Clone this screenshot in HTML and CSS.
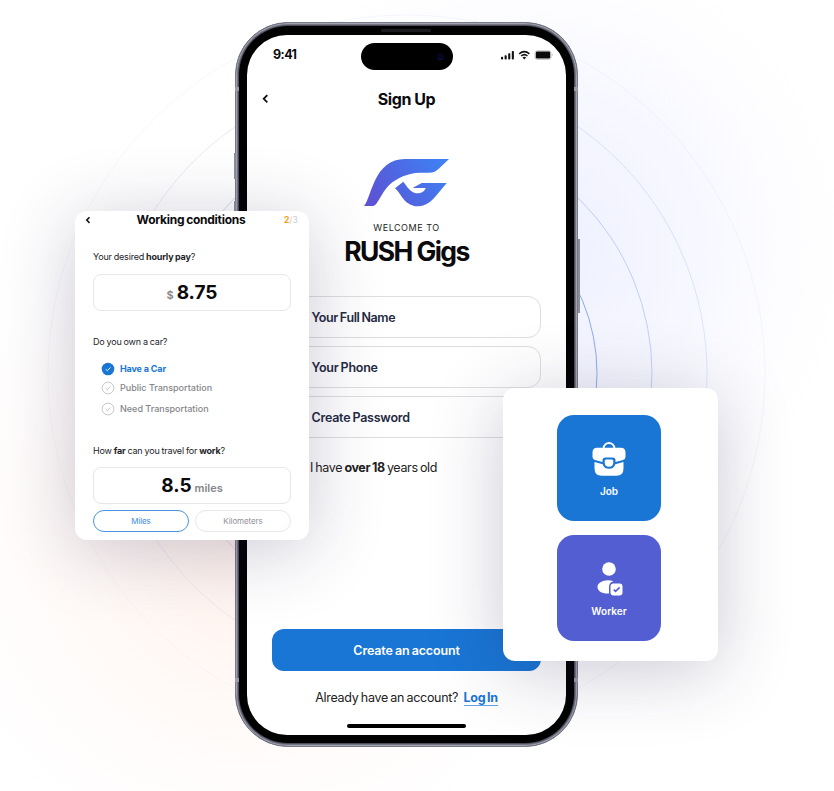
FILE: index.html
```html
<!DOCTYPE html>
<html lang="en">
<head>
<meta charset="utf-8">
<title>RUSH Gigs</title>
<link rel="stylesheet" href="styles.css">
</head>
<body>
<main class="stage">
  <svg class="rings" viewBox="0 0 834 791" aria-hidden="true">
    <defs>
      <linearGradient id="ring" x1="0" y1="1" x2="1" y2="0">
        <stop offset="0" stop-color="#e6c9e6"/><stop offset=".3" stop-color="#b7b2e8"/><stop offset="1" stop-color="#79a6f4"/>
      </linearGradient>
    </defs>
    <g fill="none" stroke="url(#ring)">
      <circle cx="406.5" cy="373.5" r="190.5"/>
      <circle cx="406.5" cy="373.5" r="245.5" opacity=".5"/>
      <circle cx="406.5" cy="373.5" r="300.5" opacity=".27"/>
      <circle cx="406.5" cy="373.5" r="358.5" opacity=".1"/>
    </g>
  </svg>

  <section class="phone">
    <i class="key key-mute"></i><i class="key key-volume"></i><i class="key key-power"></i>
    <i class="band band-tl"></i><i class="band band-tr"></i><i class="band band-bl"></i><i class="band band-br"></i>
    <i class="speaker"></i>
    <div class="screen">
      <header class="status">
        <span class="time">9:41</span>
        <span class="island"><i class="lens"></i></span>
        <svg class="signals" width="52" height="12" viewBox="0 0 52 12" aria-hidden="true">
          <g fill="#111"><rect x="0" y="6.8" width="2.1" height="2.7" rx=".7"/><rect x="3.6" y="5.3" width="2.1" height="4.2" rx=".7"/><rect x="7.2" y="3.2" width="2.1" height="6.3" rx=".7"/><rect x="10.8" y="1" width="2.1" height="8.5" rx=".7"/></g>
          <g fill="none" stroke="#111" stroke-width="1.5"><path d="M18.2 3.9Q23.3-.6 28.4 3.9"/><path d="M20.1 6Q23.3 3.3 26.5 6"/></g>
          <path d="M21.5 7.4Q23.3 6.2 25.1 7.4L23.3 9.4z" fill="#111"/>
          <rect x="34" y=".8" width="16" height="8.600" rx="2.300" fill="none" stroke="#aaa" stroke-width=".7"/><rect x="34.800" y="1.600" width="14.400" height="7" rx="1.400" fill="#090909"/><path d="M51 3.600v3q1-1.500 0-3" fill="#999"/>
        </svg>
      </header>
      <div class="titlebar">
        <svg class="back" width="8" height="10" viewBox="0 0 8 10"><path d="M6.300 1.200 2.700 4.800 6.300 8.400" fill="none" stroke="#111" stroke-width="1.800"/></svg>
        <h1>Sign Up</h1>
      </div>
      <svg class="logo" width="86" height="49" viewBox="0 0 86 49" aria-hidden="true">
        <defs><linearGradient id="brand" gradientUnits="userSpaceOnUse" x1="12" y1="46" x2="76" y2="2"><stop offset="0" stop-color="#5b54d4"/><stop offset="1" stop-color="#3f80f4"/></linearGradient></defs>
        <path fill="url(#brand)" d="M0 48C4 43 6 33 11 22.500 17 10 26 1 41 1H85L75 10.500Q71 14.700 65 14.700H56C44 15 33 20 26 26.300 19 33 16 41 12.500 45.500 11 47.500 9.500 48 8 48ZM31 30.300 39.300 23.700C42 27 45 32 48.500 34 53 36.500 60 35.500 61.700 30H48.500L57.700 25H82.700L72.700 37C67 44 61 48.300 54.300 48.300 46 48.300 41 43.500 37.700 38.700 35.500 35.500 33.500 32.500 31 30.300Z"/>
      </svg>
      <p class="welcome">WELCOME TO</p>
      <h2>RUSH Gigs</h2>
      <form class="fields">
        <div class="field name">Your Full Name</div>
        <div class="field tel">Your Phone</div>
        <div class="field pass">Create Password</div>
      </form>
      <p class="age">I have <b>over 18</b> years old</p>
      <div class="cta">Create an account</div>
      <p class="login">Already have an account? <a>Log In</a></p>
      <i class="home"></i>
    </div>
  </section>

  <section class="card conditions">
    <header class="card-head">
      <svg width="8" height="9" viewBox="0 0 8 9"><path d="M5.500 1.300 2.700 4.100 5.500 6.900" fill="none" stroke="#111" stroke-width="1.500"/></svg>
      <h3>Working conditions</h3>
      <span class="step"><b>2</b>/3</span>
    </header>
    <p class="ask pay">Your desired <b>hourly pay</b>?</p>
    <div class="value"><small class="dollar">$</small><span>8.75</span></div>
    <p class="ask car">Do you own a car?</p>
    <ul class="options">
      <li class="on"><svg width="14" height="14" viewBox="0 0 14 14"><circle cx="7" cy="7" r="6.300" fill="#1976d5" stroke="none"/><path d="m4.700 7.200 1.600 1.500 3.100-3.200" fill="none" stroke="#fff"/></svg><span>Have a Car</span></li>
      <li><svg width="14" height="14" viewBox="0 0 14 14"><circle cx="7" cy="7" r="5.900"/><path d="m4.700 7.200 1.600 1.500 3.100-3.200"/></svg><span>Public Transportation</span></li>
      <li><svg width="14" height="14" viewBox="0 0 14 14"><circle cx="7" cy="7" r="5.900"/><path d="m4.700 7.200 1.600 1.500 3.100-3.200"/></svg><span>Need Transportation</span></li>
    </ul>
    <p class="ask far">How <b>far</b> can you travel for <b>work</b>?</p>
    <div class="value"><span>8.5</span><small class="unit">miles</small></div>
    <div class="units"><span class="active">Miles</span><span>Kilometers</span></div>
  </section>

  <section class="card roles">
    <div class="role job">
      <svg width="34" height="36" viewBox="0 0 34 36" aria-hidden="true">
        <path d="M11.500 7.500C12 .2 22 .2 22.500 7.500" fill="none" stroke="#fff" stroke-width="2"/>
        <path fill="#fff" fill-rule="evenodd" d="M5 6.800H29Q33.500 6.800 33.500 11.500V16Q33.500 18.500 31 19.100L23.500 21V19.500Q23.500 16.500 20.500 16.500H13.500Q10.500 16.500 10.500 19.500V21L3 19.100Q.5 18.500 .5 16V11.500Q.5 6.800 5 6.800ZM2.500 20.900 10.700 23.200Q12 27.800 17 27.800 22 27.800 23.300 23.200L31.500 20.900V27.300Q31.500 34.800 24.500 34.800H9.500Q2.500 34.800 2.500 27.300ZM14 18.500H20Q21.300 18.500 21.300 20V21.500Q21.300 25.700 17 25.700T12.700 21.500V20Q12.700 18.500 14 18.500Z"/>
      </svg>
      <span>Job</span>
    </div>
    <div class="role worker">
      <svg width="34" height="36" viewBox="0 0 34 36" aria-hidden="true">
        <circle cx="17" cy="8" r="6.800" fill="#fff"/>
        <path fill="#fff" d="M21.500 20.200Q17 21.500 17 26V32.500C10 33 5.500 30 5.500 26 5.500 21 13.500 17.500 21.500 20.200Z"/>
        <rect x="18.500" y="22.500" width="12" height="12" rx="3" fill="#fff"/>
        <path d="m21.700 28.600 1.900 1.800 4-4" fill="none" stroke="#525ed2" stroke-width="1.500"/>
      </svg>
      <span>Worker</span>
    </div>
  </section>
</main>
</body>
</html>
```
FILE: styles.css
```css
* { box-sizing: border-box; }
body, h1, h2, h3, p, ul { margin: 0; padding: 0; }
body { font-family: Inter, "Liberation Sans", sans-serif; background: #fff; color: #0b0b0d; overflow: hidden; }
p, h1, h2, h3, span, .field, .cta { white-space: nowrap; }

.stage {
  position: relative; width: 834px; height: 791px; overflow: hidden;
  background:
    radial-gradient(circle 310px at 540px 250px, rgba(96,116,255,.11), rgba(96,116,255,.065) 40%, rgba(96,116,255,.02) 75%, rgba(96,116,255,0)),
    radial-gradient(circle 330px at 250px 540px, rgba(255,135,85,.11), rgba(255,135,85,.06) 40%, rgba(255,135,85,.02) 75%, rgba(255,135,85,0)),
    #fff;
}
.rings { position: absolute; inset: 0; }

.phone {
  position: absolute; left: 235px; top: 22px; width: 343px; height: 725px;
  border-radius: 53px; padding: 12.5px 12px;
  background: #020203; border: 1px solid #777986;
  box-shadow: inset 0 0 0 1px #a1a3b2, inset 0 0 0 2px #747684, inset 0 0 0 3px #4c4d59;
}
.screen {
  display: flex; flex-direction: column; align-items: center; position: relative;
  width: 319px; height: 700px; margin: -1px; border-radius: 40px; background: #fff; overflow: hidden;
}
.speaker { position: absolute; left: 145px; top: 6px; width: 50px; height: 3px; border-radius: 2px; background: #1b1b20; }
.band { position: absolute; width: 4px; height: 4px; background: #9b9ca8; }
.band-tl { left: -1px; top: 64px; } .band-tr { right: -1px; top: 64px; }
.band-bl { left: -1px; bottom: 64px; } .band-br { right: -1px; bottom: 64px; }
.key { position: absolute; width: 2px; background: #8a8c98; }
.key-mute { left: -2px; top: 130px; height: 26px; }
.key-volume { left: -2px; top: 178px; height: 48px; }
.key-power { right: -3px; top: 216px; height: 74px; }

.status { display: flex; align-self: stretch; height: 36px; margin-top: 8px; padding-left: 26px; }
.time { width: 88px; padding-top: 4px; font-size: 12.5px; line-height: 16px; font-weight: 700; letter-spacing: -.55px; }
.island { position: relative; width: 92px; height: 27px; margin-left: -.5px; border-radius: 14px; background: #000; }
.lens { position: absolute; right: 9px; top: 10px; width: 7px; height: 7px; border-radius: 50%; background: #05051c; border-bottom: 1px solid #0b1552; }
.signals { margin: 7px 0 0 48.5px; }
.titlebar { display: flex; align-self: stretch; align-items: center; height: 24px; margin-top: 8px; padding-left: 14px; }
h1 { flex: 1; margin-right: 22px; text-align: center; font-size: 16px; line-height: 24px; letter-spacing: -.45px; font-weight: 650; }
.logo { margin-top: 47px; }
.welcome { margin-top: 14px; font-size: 9px; line-height: 14px; letter-spacing: .53px; color: #222; }
h2 { margin-top: 1px; font-size: 26.5px; line-height: 30px; letter-spacing: -1.6px; font-weight: 700; }
.fields { display: grid; gap: 8px; width: 269px; margin-top: 30px; }
.field { height: 42px; padding-left: 38.5px; border: 1px solid #dedee1; border-radius: 13px; line-height: 41px; font-size: 12.5px; font-weight: 600; color: #252a42; letter-spacing: -.25px; word-spacing: -.7px; }
.name { letter-spacing: -.4px; }
.age { align-self: flex-start; margin: 21px 0 0 63px; font-size: 12.5px; line-height: 18px; letter-spacing: -.36px; word-spacing: -.9px; color: #222; }
.cta { width: 269px; height: 42px; margin-top: 152px; border-radius: 12px; background: #1976d5; color: #fff; font-size: 12.5px; font-weight: 600; line-height: 43px; text-align: center; letter-spacing: -.15px; word-spacing: -.8px; }
.login { margin-top: 18px; font-size: 12.5px; line-height: 17px; letter-spacing: -.29px; word-spacing: -.9px; color: #222; }
.login a { margin-left: 3px; color: #1976d5; font-weight: 650; border-bottom: 1px solid #64a4e5; }
.home { width: 119px; height: 4px; margin-top: 18px; border-radius: 2px; background: #000; }

.card { position: absolute; background: #fff; border-radius: 12px; box-shadow: 0 10px 75px rgba(37,31,75,.24); }
.conditions { left: 75px; top: 211px; width: 234px; height: 329px; padding: 0 18px; }
.card-head { display: flex; align-items: center; height: 18px; margin: 0 -7px 0 -9px; }
h3 { flex: 1; margin-left: 6px; text-align: center; font-size: 12px; line-height: 18px; font-weight: 650; letter-spacing: -.28px; word-spacing: -.5px; }
.step { width: 14px; font-size: 8.5px; color: #ccc; } .step b { color: #f9a01b; }
.ask { font-size: 9px; line-height: 14px; letter-spacing: -.2px; word-spacing: -.3px; color: #242428; }
.pay { margin-top: 21px; } .car { margin-top: 24px; } .far { margin-top: 28px; }
.value { display: flex; align-items: baseline; justify-content: center; gap: 3px; height: 37px; margin-top: 9px; border: 1px solid #e7e7e9; border-radius: 8px; line-height: 36px; font-size: 19px; font-weight: 650; }
.pay + .value { margin-top: 10px; }
.value small { font-size: 11px; font-weight: 600; color: #858589; }
.options { display: grid; gap: 5px; margin: 12px 0 0 8px; list-style: none; }
.options li { display: flex; align-items: center; gap: 5px; height: 15px; font-size: 9px; font-weight: 550; color: #85858a; }
.options li + li { margin-top: -1px; }
.options li:last-child { margin-top: 1px; }
.options svg { fill: none; stroke: #bfbfc3; stroke-width: .9; }
.options .on { color: #1976d5; font-weight: 650; letter-spacing: -.15px; }
.units { display: flex; gap: 6px; margin-top: 6px; }
.units span { flex: 1; height: 22px; border: 1px solid #e7e7e9; border-radius: 11px; text-align: center; font-size: 8px; line-height: 20px; letter-spacing: -.1px; color: #929297; }
.units .active { border-color: #4a94df; color: #3c8cde; }

.roles { left: 503px; top: 388px; width: 215px; height: 273px; padding: 27px 0 0 54px; display: grid; align-content: start; gap: 14px; }
.role { display: flex; flex-direction: column; align-items: center; width: 104px; height: 106px; padding-top: 26px; border-radius: 17px; color: #fff; font-size: 10px; font-weight: 600; line-height: 14px; gap: 7px; }
.job { background: #1976d5; } .worker { background: #525ed2; }
```
